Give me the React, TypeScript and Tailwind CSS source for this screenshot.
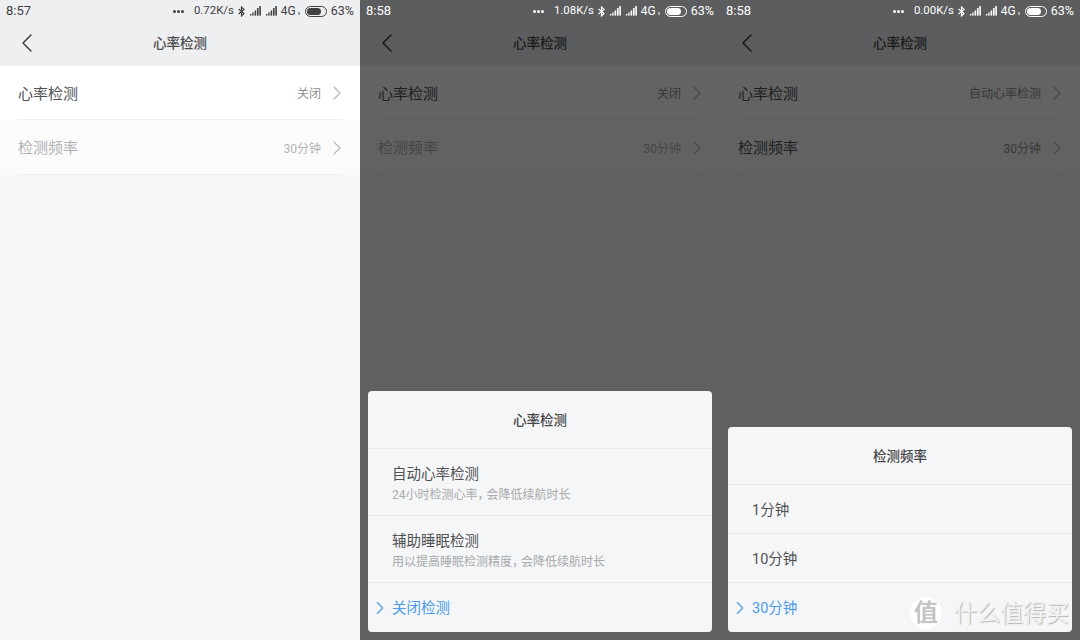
import { ChevronLeft, ChevronRight } from "lucide-react";

const cjk = { fontFamily: '"Roboto", "Noto Sans CJK SC", sans-serif' };

function Signal({ color }: { color: string }) {
    return (
        <svg width="11" height="10" viewBox="0 0 11 10" fill={color}>
            <rect x="0" y="8" width="1.4" height="1.6" />
            <rect x="2.3" y="6.5" width="1.4" height="3.1" />
            <rect x="4.6" y="4.5" width="1.6" height="5.1" />
            <rect x="7" y="2" width="1.6" height="7.6" />
            <rect x="9.3" y="0" width="1.6" height="9.6" />
        </svg>
    );
}

function Bluetooth({ color }: { color: string }) {
    return (
        <svg width="7" height="11" viewBox="0 0 7 11" fill="none" stroke={color} strokeWidth="1.2">
            <path d="M0.6 3 L6 7.6 L3.5 10 V1 L6 3.4 L0.6 8" />
        </svg>
    );
}

function StatusBar({ time, speed, dark }: { time: string; speed: string; dark?: boolean }) {
    const color = dark ? "#ffffff" : "#3f4142";
    return (
        <div
            className={`h-[22px] flex items-center justify-between pl-[6px] pr-[6px] text-[12px] ${dark ? "text-white" : "text-[#3f4142]"}`}
        >
            <span className="text-[13px]">{time}</span>
            <div className="flex items-center">
                <span className="flex gap-[1px] mr-[10px]">
                    <span className="w-[3px] h-[3px] rounded-full" style={{ background: color }} />
                    <span className="w-[3px] h-[3px] rounded-full" style={{ background: color }} />
                    <span className="w-[3px] h-[3px] rounded-full" style={{ background: color }} />
                </span>
                <span className="mr-[4px] text-[11.4px]">{speed}</span>
                <span className="mr-[5px]"><Bluetooth color={color} /></span>
                <span className="mr-[5px]"><Signal color={color} /></span>
                <span className="mr-[4px]"><Signal color={color} /></span>
                <span className="text-[12px]">4G</span>
                <span className="w-[2px] h-[3px] ml-[2px] mr-[5px] opacity-50 self-end mb-[5px]" style={{ background: color }} />
                <span
                    className="w-[22px] h-[11px] rounded-full border flex items-center justify-start p-[1px] mr-[4px]"
                    style={{ borderColor: color }}
                >
                    <span className="w-[14px] h-full rounded-full" style={{ background: color }} />
                </span>
                <span className="text-[12.5px]">63%</span>
            </div>
        </div>
    );
}

function Row({
    label,
    value,
    muted,
    white,
}: {
    label: string;
    value: string;
    muted?: boolean;
    white?: boolean;
}) {
    return (
        <div className={`pl-[18px] pr-[18px] ${white ? "bg-white" : "bg-[#fbfbfc]"}`}>
            <div className={`${white ? "h-[54px]" : "h-[55px]"} pt-[3px] flex items-center justify-between border-b border-[#eeeff1]`}>
                <span className={`text-[15px] ${muted ? "text-[#b0b1b3]" : "text-[#505152]"}`}>{label}</span>
                <div className="flex items-center">
                    <span className={`text-[12px] ${muted ? "text-[#b4b5b7]" : "text-[#8e8f91]"}`}>{value}</span>
                    <ChevronRight className="w-6 h-6 ml-1 -mr-[7px] -mt-[2px] text-[#b4b5b7]" strokeWidth={1.1} />
                </div>
            </div>
        </div>
    );
}

function Check() {
    return <ChevronRight className="absolute left-[1px] top-1/2 -translate-y-1/2 w-[22px] h-[22px] text-[#4a9be8]" strokeWidth={1.2} />;
}

function Dialog({ title, children }: { title: string; children: React.ReactNode }) {
    return (
        <div className="mx-2 mb-2 bg-[#f5f6f8] rounded-[4px] overflow-hidden">
            <div className="h-[58px] pt-[2px] flex items-center justify-center border-b border-[#e6e7e9] text-[13.5px] font-medium text-[#454647]">
                {title}
            </div>
            {children}
        </div>
    );
}

function Option({ label, hint, active }: { label: string; hint?: React.ReactNode; active?: boolean }) {
    const h = hint ? "h-[67px] pt-[5px]" : "h-[49px] pt-[3px]";
    return (
        <div className={`relative ${h} pl-6 flex flex-col justify-center border-b border-[#e6e7e9] last:border-b-0`}>
            {active && <Check />}
            <span className={`text-[14.5px] leading-[20px] ${active ? "text-[#4a9be8]" : "text-[#505152]"}`}>{label}</span>
            {hint && <span className="text-[12px] leading-[18px] mt-[1px] text-[#a8a9ab]">{hint}</span>}
        </div>
    );
}

function Screen({
    time,
    speed,
    first,
    secondMuted,
    children,
}: {
    time: string;
    speed: string;
    first: string;
    secondMuted: boolean;
    children?: React.ReactNode;
}) {
    const dark = !!children;
    return (
        <div className="relative h-[640px] bg-[#f5f6f8] overflow-hidden">
            <div className="bg-[#eeeff1]">
                <div className="relative z-10">
                    <StatusBar time={time} speed={speed} dark={dark} />
                </div>
                <div className="relative h-[44px] pb-[2px] flex items-center justify-center">
                    <ChevronLeft className="absolute left-[11px] top-[5px] w-8 h-8 text-[#3c3d3e]" strokeWidth={1.1} />
                    <span className="text-[13.5px] font-medium text-[#4a4b4c]">心率检测</span>
                </div>
            </div>
            <Row label="心率检测" value={first} white />
            <Row label="检测频率" value="30分钟" muted={secondMuted} />
            {children && (
                <div className="absolute inset-0 bg-black/[0.61] flex flex-col justify-end">{children}</div>
            )}
        </div>
    );
}

export default function App() {
    return (
        <div className="w-[1080px] h-[640px] grid grid-cols-3 overflow-hidden relative" style={cjk}>
            <Screen time="8:57" speed="0.72K/s" first="关闭" secondMuted />
            <Screen time="8:58" speed="1.08K/s" first="关闭" secondMuted>
                <Dialog title="心率检测">
                    <Option
                        label="自动心率检测"
                        hint={<>24小时检测心率<span className="tracking-[-3px]">，</span>会降低续航时长</>}
                    />
                    <Option
                        label="辅助睡眠检测"
                        hint={<>用以提高睡眠检测精度<span className="tracking-[-3px]">，</span>会降低续航时长</>}
                    />
                    <Option label="关闭检测" active />
                </Dialog>
            </Screen>
            <Screen time="8:58" speed="0.00K/s" first="自动心率检测" secondMuted={false}>
                <Dialog title="检测频率">
                    <Option label="1分钟" />
                    <Option label="10分钟" />
                    <Option label="30分钟" active />
                </Dialog>
            </Screen>
            <div className="absolute left-[910px] top-[597px] flex items-center gap-[12px]">
                <span className="w-8 h-8 rounded-full bg-white flex items-center justify-center text-[24px] text-[#c4c4c4] [text-shadow:0_0_1px_#999999]">值</span>
                <span className="text-[23px] leading-none text-[#f2f2f2] [text-shadow:1px_1px_1px_#b5b5b5]">什么值得买</span>
            </div>
        </div>
    );
}
